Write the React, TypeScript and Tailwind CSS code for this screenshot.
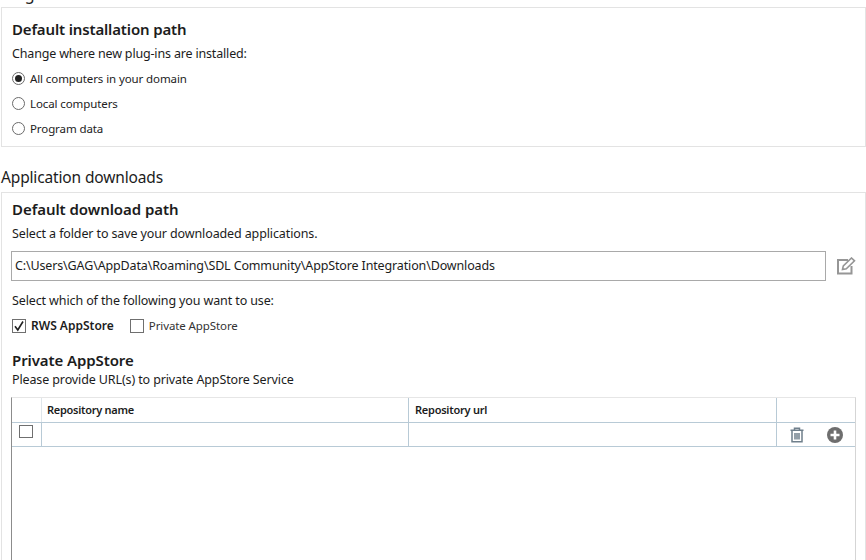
const font = { fontFamily: '"Noto Sans", "Open Sans", sans-serif' };

function Radio({ checked, label }: { checked?: boolean; label: string }) {
  return (
    <div className="flex h-[25px] items-center">
      <span className="flex h-[13px] w-[13px] items-center justify-center rounded-full border border-[#6b6b6b] bg-white">
        {checked && <span className="h-[7px] w-[7px] rounded-full bg-[#222]" />}
      </span>
      <span className="ml-[5px] text-[11.5px] leading-[16px] text-[#222] tracking-[-0.1px]">{label}</span>
    </div>
  );
}

function Check({ checked }: { checked?: boolean }) {
  return (
    <span className="flex h-[14px] w-[14px] items-center justify-center border border-[#6f6f6f] bg-white">
      {checked && (
        <svg viewBox="0 0 12 12" className="h-[12px] w-[12px]" fill="none" stroke="#222" strokeWidth="1.6">
          <path d="M2 6.2 L4.8 10 L10 1.5" />
        </svg>
      )}
    </span>
  );
}

export default function App() {
  return (
    <div className="h-[560px] w-[866px] overflow-hidden bg-white text-[#1c1c1c]" style={font}>
      <div className="mt-[-17px] h-[24px] pl-[1px] text-[16px] leading-[22px]">Plug-ins</div>

      <section className="ml-[1px] h-[140px] border border-[#e3e3e3] pl-[10px] pt-[11px]">
        <h2 className="text-[15px] font-semibold leading-[20px] tracking-[-0.15px]">Default installation path</h2>
        <p className="mt-[7px] text-[12.5px] leading-[16px] tracking-[-0.17px]">Change where new plug-ins are installed:</p>
        <div className="mt-[4px]">
          <Radio checked label="All computers in your domain" />
          <Radio label="Local computers" />
          <Radio label="Program data" />
        </div>
      </section>

      <h1 className="mt-[19px] h-[26px] pl-[1px] text-[15.5px] leading-[22px] tracking-[-0.15px]">Application downloads</h1>

      <section className="ml-[1px] h-[400px] border border-[#e3e3e3] pl-[10px] pt-[6px]">
        <h2 className="text-[15px] font-semibold leading-[20px] tracking-[-0.05px]">Default download path</h2>
        <p className="mt-[7px] text-[12.5px] leading-[16px] tracking-[-0.12px]">Select a folder to save your downloaded applications.</p>

        <div className="ml-[-1px] mt-[9px] flex items-center">
          <div className="flex h-[30px] w-[815px] items-center border border-[#a9a9a9] pl-[3px] text-[12.5px] tracking-[-0.14px]">
            C:\Users\GAG\AppData\Roaming\SDL Community\AppStore Integration\Downloads
          </div>
          <svg viewBox="0 0 20 18" className="ml-[10px] h-[18px] w-[20px]" fill="none" stroke="#969696" strokeWidth="2">
            <path d="M12 3H2v13.5h13.5V9" />
            <path d="M6.5 12.5l.8-3.6L15.5 1l3 2.8-8.2 8z" fill="#fff" strokeWidth="1.6" />
          </svg>
        </div>

        <p className="mt-[12px] text-[12.5px] leading-[16px] tracking-[-0.12px]">Select which of the following you want to use:</p>

        <div className="mt-[8px] flex h-[18px] items-center">
          <Check checked />
          <span className="ml-[5px] text-[12px] font-semibold">RWS AppStore</span>
          <span className="ml-[16px]"><Check /></span>
          <span className="ml-[5px] text-[11.5px] tracking-[-0.1px] text-[#333]">Private AppStore</span>
        </div>

        <h2 className="mt-[15px] text-[15px] font-semibold leading-[20px] tracking-[-0.1px]">Private AppStore</h2>
        <p className="mt-[2px] text-[12.5px] leading-[16px] tracking-[-0.12px]">Please provide URL(s) to private AppStore Service</p>

        <div className="ml-[-1px] mt-[9px] h-[200px] w-[845px] border border-t-[#e6e6e6] border-r-[#d5d5d5] border-b-0 border-l-[#8c8c8c]">
          <div className="flex h-[25px] border-b border-[#b8cad6]">
            <div className="w-[30px] border-r border-[#dfe6eb]" />
            <div className="w-[367px] border-r border-[#b8cad6] pl-[5px] text-[11px] font-semibold leading-[24px] tracking-[-0.28px]">Repository name</div>
            <div className="w-[368px] border-r border-[#b8cad6] pl-[6px] text-[11px] font-semibold leading-[24px] tracking-[-0.25px]">Repository url</div>
            <div className="flex-1" />
          </div>
          <div className="flex h-[24px] border-b border-[#b8cad6]">
            <div className="flex w-[30px] items-center justify-center border-r border-[#b8cad6] pb-[6px] pr-[1px]">
              <span className="h-[13px] w-[14px] border border-[#6f6f6f]" />
            </div>
            <div className="w-[367px] border-r border-[#b8cad6]" />
            <div className="w-[368px] border-r border-[#b8cad6]" />
            <div className="flex flex-1 items-center">
              <svg viewBox="0 0 14 16" className="ml-[13px] h-[16px] w-[14px]" fill="none" stroke="#6f7f8b" strokeWidth="1.5">
                <path d="M0.5 3.2h13M4.5 3V1.2h5V3M2 3.5V14.8h10V3.5M5 6v6.5M7 6v6.5M9 6v6.5" />
              </svg>
              <svg viewBox="0 0 16 16" className="ml-[23px] h-[16px] w-[16px]">
                <circle cx="8" cy="8" r="8" fill="#6e6e6e" />
                <path d="M8 3.5v9M3.5 8h9" stroke="#fff" strokeWidth="2.6" />
              </svg>
            </div>
          </div>
        </div>
      </section>
    </div>
  );
}
